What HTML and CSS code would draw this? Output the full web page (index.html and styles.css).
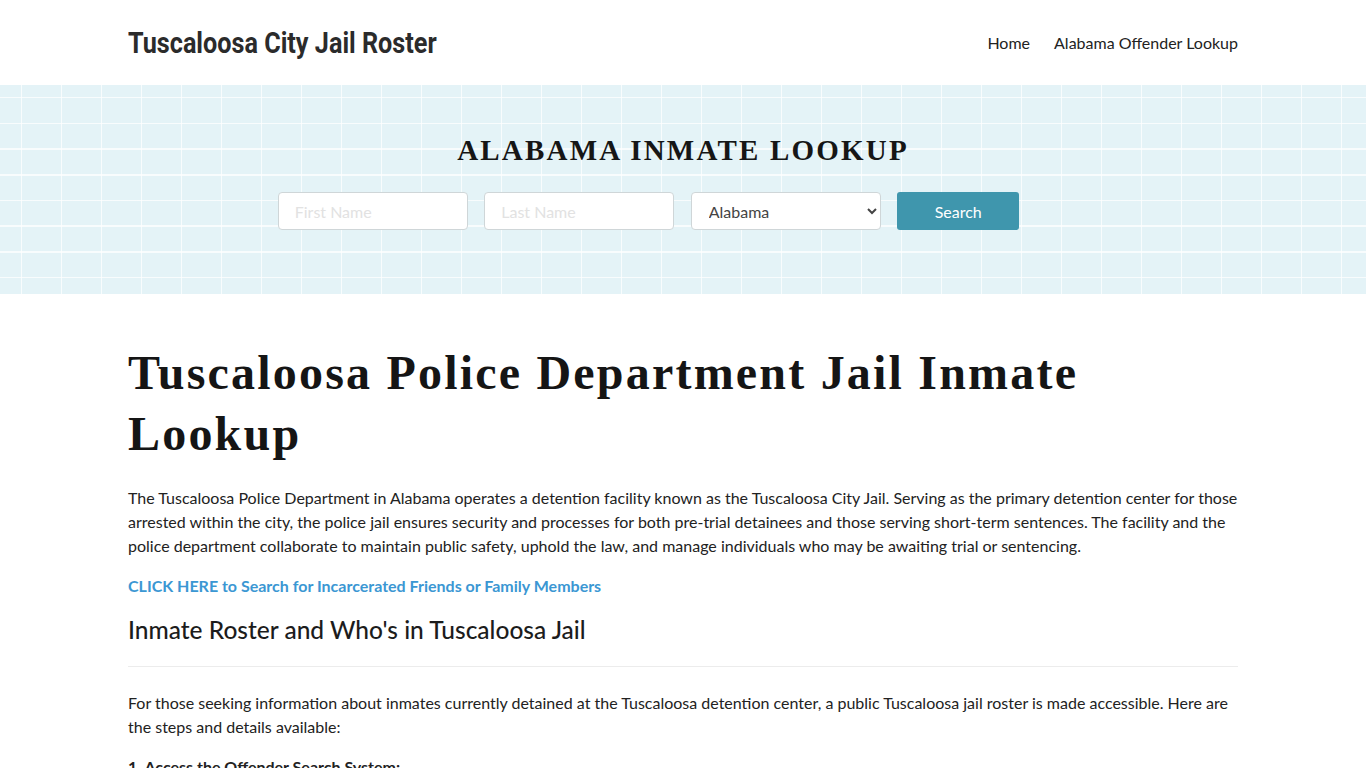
FILE: index.html
```html
<!DOCTYPE html>
<html lang="en">
<head>
<meta charset="utf-8">
<title>Tuscaloosa City Jail Roster</title>
<link rel="stylesheet" href="styles.css">
</head>
<body>
<header class="site-header">
  <div class="container header-row">
    <a class="brand" href="#">Tuscaloosa City Jail Roster</a>
    <nav class="nav">
      <a href="#">Home</a>
      <a href="#">Alabama Offender Lookup</a>
    </nav>
  </div>
</header>
<section class="hero">
  <h2 class="hero-title">ALABAMA INMATE LOOKUP</h2>
  <form class="search">
    <input class="field" type="text" placeholder="First Name">
    <input class="field" type="text" placeholder="Last Name">
    <select class="field select"><option>Alabama</option></select>
    <button class="btn" type="button">Search</button>
  </form>
</section>
<main class="container content">
  <h1 class="title">Tuscaloosa Police Department Jail Inmate Lookup</h1>
  <p>The Tuscaloosa Police Department in Alabama operates a detention facility known as the Tuscaloosa City Jail. Serving as the primary detention center for those arrested within the city, the police jail ensures security and processes for both pre-trial detainees and those serving short-term sentences. The facility and the police department collaborate to maintain public safety, uphold the law, and manage individuals who may be awaiting trial or sentencing.</p>
  <p><a class="cta" href="#">CLICK HERE to Search for Incarcerated Friends or Family Members</a></p>
  <h2 class="sub">Inmate Roster and Who's in Tuscaloosa Jail</h2>
  <hr class="rule">
  <p>For those seeking information about inmates currently detained at the Tuscaloosa detention center, a public Tuscaloosa jail roster is made accessible. Here are the steps and details available:</p>
  <p class="step">1. Access the Offender Search System:</p>
</main>
</body>
</html>
```
FILE: styles.css
```css
* { box-sizing: border-box; }
body {
  margin: 0;
  font-family: Lato, "Open Sans", sans-serif;
  color: #222;
  background: #fff;
  font-size: 16px;
  line-height: 24px;
}
.container {
  width: 1110px;
  margin: 0 auto;
}
.site-header { height: 85px; background: #fff; }
.header-row {
  height: 85px;
  display: flex;
  align-items: center;
  justify-content: space-between;
}
.brand {
  display: inline-block;
  font-family: Roboto, "DejaVu Sans", sans-serif;
  font-weight: 700;
  font-size: 30px;
  color: #2b2b2b;
  text-decoration: none;
  padding-top: 1px;
  transform: scaleX(0.84);
  transform-origin: left center;
  white-space: nowrap;
}
.nav { display: flex; gap: 24px; }
.nav a {
  color: #222;
  text-decoration: none;
}
.hero {
  height: 209px;
  background-color: #e4f3f7;
  background-image:
    repeating-linear-gradient(90deg, transparent 0 21px, rgba(255,255,255,0.75) 21px 22.5px, transparent 22.5px 40px),
    repeating-linear-gradient(180deg, transparent 0 12px, rgba(255,255,255,0.75) 12px 13.5px, transparent 13.5px 25.7px);
  padding-top: 49px;
  text-align: center;
}
.hero-title {
  margin: 0;
  font-family: "Liberation Serif", serif;
  font-weight: 700;
  font-size: 29px;
  line-height: 32px;
  letter-spacing: 2.2px;
  color: #161616;
}
.search {
  display: flex;
  justify-content: center;
  gap: 16.5px;
  margin-top: 26px;
  padding-right: 69px;
}
.field {
  width: 190px;
  height: 38px;
  border: 1px solid #cfd6d8;
  border-radius: 4px;
  background: #fff;
  font-family: Lato, sans-serif;
  font-size: 16px;
  padding: 0 16px;
  color: #444;
}
.field::placeholder { color: #e2e2e2; }
.select { padding: 0 10px 0 13px; }
.btn {
  width: 122px;
  height: 38px;
  border: 0;
  border-radius: 3px;
  background: #3f96ad;
  color: #fff;
  font-family: Lato, sans-serif;
  font-size: 16px;
}
.content { padding-top: 48px; }
.title {
  margin: 0 0 22px;
  font-family: "Liberation Serif", serif;
  font-weight: 700;
  font-size: 48px;
  line-height: 61px;
  letter-spacing: 2.2px;
  color: #151515;
}
p { margin: 0 0 16px; }
.cta {
  color: #3b97d3;
  font-weight: 700;
  text-decoration: none;
}
.sub {
  margin: 0;
  font-weight: 500;
  font-size: 24.5px;
  line-height: 32px;
  color: #1c1c1c;
}
.rule {
  border: 0;
  border-top: 1px solid #ececec;
  margin: 20px 0 24px;
}
.step { font-weight: 700; }
```
